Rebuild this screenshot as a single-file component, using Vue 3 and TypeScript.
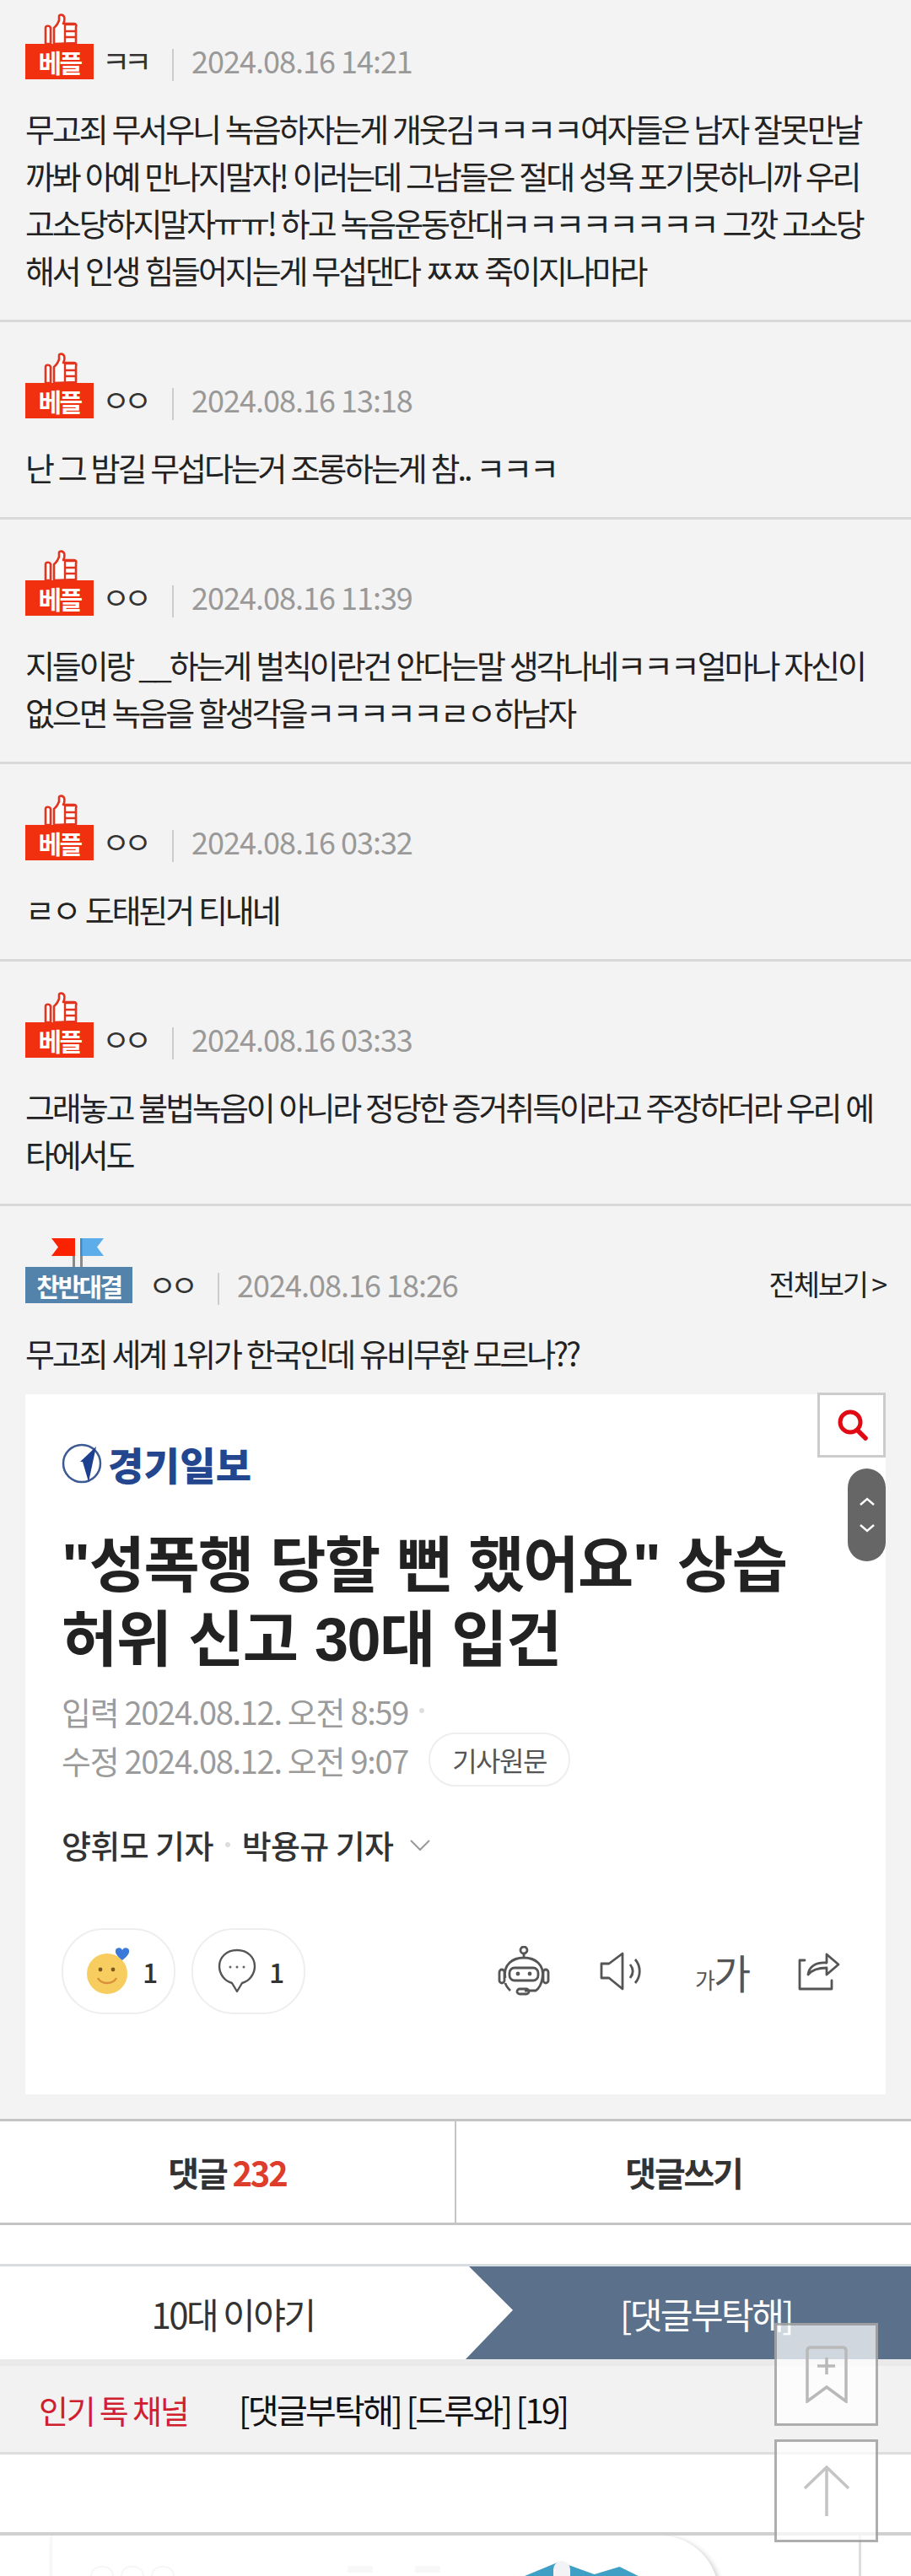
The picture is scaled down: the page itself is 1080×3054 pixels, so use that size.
<script setup lang="ts">
interface Comment { name: string; date: string; lines: string[] }
const comments: Comment[] = [
  { name: 'ㅋㅋ', date: '2024.08.16 14:21', lines: ['무고죄 무서우니 녹음하자는게 개웃김ㅋㅋㅋㅋ여자들은 남자 잘못만날', '까봐 아예 만나지말자! 이러는데 그남들은 절대 성욕 포기못하니까 우리', '고소당하지말자ㅠㅠ! 하고 녹음운동한대ㅋㅋㅋㅋㅋㅋㅋㅋ 그깟 고소당', '해서 인생 힘들어지는게 무섭댄다 ㅉㅉ 죽이지나마라'] },
  { name: 'ㅇㅇ', date: '2024.08.16 13:18', lines: ['난 그 밤길 무섭다는거 조롱하는게 참.. ㅋㅋㅋ'] },
  { name: 'ㅇㅇ', date: '2024.08.16 11:39', lines: ['지들이랑 __하는게 벌칙이란건 안다는말 생각나네ㅋㅋㅋ얼마나 자신이', '없으면 녹음을 할생각을ㅋㅋㅋㅋㅋㄹㅇ하남자'] },
  { name: 'ㅇㅇ', date: '2024.08.16 03:32', lines: ['ㄹㅇ 도태된거 티내네'] },
  { name: 'ㅇㅇ', date: '2024.08.16 03:33', lines: ['그래놓고 불법녹음이 아니라 정당한 증거취득이라고 주장하더라 우리 에', '타에서도'] },
]
</script>

<template>
  <div class="page">
    <section v-for="(c, i) in comments" :key="i" class="row" :class="{ first: i === 0 }">
      <div class="head">
        <div class="badge-col">
          <svg class="thumb" width="40" height="36" viewBox="0 0 40 36">
            <path d="M12 36V17c4-3 5-6 6-9V3c0-2 5-2 6 1 1 3 0 6-1 8h13c2 0 3 2 2 4v19z" fill="#fff" stroke="#e2341f" stroke-width="2.600" stroke-linejoin="round" />
            <path d="M2 36V17c0-3 5-3 6 0v19z" fill="#fff" stroke="#e2341f" stroke-width="2.600" />
            <path d="M25 13h13M25 21h13M25 28h13" stroke="#e2341f" stroke-width="2.400" />
            <path d="M25 12v24" stroke="#e2341f" stroke-width="2.400" />
          </svg>
          <div class="badge best">베플</div>
        </div>
        <span class="name">{{ c.name }}</span>
        <span class="sep"></span>
        <span class="date">{{ c.date }}</span>
      </div>
      <p v-for="(l, j) in c.lines" :key="j" class="txt">{{ l }}</p>
    </section>

    <section class="topic">
      <div class="head">
        <div class="badge-col">
          <svg class="flags" width="66" height="34" viewBox="0 0 66 34">
            <path d="M2 0h28v21H2l8-10.500z" fill="#fa2200" />
            <path d="M36 0h28l-8 10.500 8 10.500H36z" fill="#5cadea" />
            <path d="M27 21h3v13h-3zM36 21h3v13h-3z" fill="#8a8a8a" />
            <path d="M36 0h2.500v21H36z" fill="#3a8ec9" />
          </svg>
          <div class="badge vs">찬반대결</div>
        </div>
        <span class="name vs-name">ㅇㅇ</span>
        <span class="sep"></span>
        <span class="date">2024.08.16 18:26</span>
        <span class="more">전체보기 &gt;</span>
      </div>
      <p class="txt title">무고죄 세계 1위가 한국인데 유비무환 모르나??</p>

      <div class="card">
        <div class="search">
          <svg width="40" height="44" viewBox="0 0 40 44">
            <circle cx="18" cy="18" r="12" fill="none" stroke="#e00a14" stroke-width="5" />
            <path d="M27 28l9 9" stroke="#e00a14" stroke-width="5.500" stroke-linecap="round" />
          </svg>
        </div>
        <div class="scroller">
          <svg width="20" height="12" viewBox="0 0 20 12"><path d="M2 10l8-7 8 7" fill="none" stroke="#fff" stroke-width="2.400" /></svg>
          <svg width="20" height="12" viewBox="0 0 20 12"><path d="M2 2l8 7 8-7" fill="none" stroke="#fff" stroke-width="2.400" /></svg>
        </div>

        <div class="logo">
          <svg width="50" height="52" viewBox="0 0 50 52">
            <circle cx="25" cy="26" r="22" fill="none" stroke="#3c5a94" stroke-width="2.500" />
            <path d="M2 24h21l19-18-9 42-7-24z" fill="#1d3f8f" />
          </svg>
          <span>경기일보</span>
        </div>
        <h2 class="headline">"성폭행 당할 뻔 했어요" 상습<br />허위 신고 30대 입건</h2>
        <div class="meta">입력 2024.08.12. 오전 8:59 <i class="dot"></i></div>
        <div class="meta">수정 2024.08.12. 오전 9:07<span class="origin">기사원문</span></div>
        <div class="authors">양휘모 기자 <i class="dot"></i> 박용규 기자
          <svg width="28" height="16" viewBox="0 0 28 16"><path d="M3 3l11 11L25 3" fill="none" stroke="#999" stroke-width="2" /></svg>
        </div>
        <div class="actions">
          <div class="react">
            <svg width="52" height="58" viewBox="0 0 52 58">
              <circle cx="24" cy="32" r="24" fill="#f6cd5e" />
              <circle cx="16" cy="27" r="2.400" fill="#7a5a20" />
              <circle cx="31" cy="27" r="2.400" fill="#7a5a20" />
              <path d="M13 37c4 8 18 8 22 0" fill="none" stroke="#d98f3a" stroke-width="2.400" />
              <path d="M42 16c-5-4-9-8-8-12 1-3 6-4 8 0 2-4 7-3 8 0 1 4-3 8-8 12z" fill="#3b79d8" />
            </svg>
            <b>1</b>
          </div>
          <div class="react">
            <svg width="48" height="56" viewBox="0 0 48 56">
              <path d="M24 3C11 3 3 12 3 22c0 10 7 18 15 20l6 10 6-10c8-2 15-10 15-20C45 12 37 3 24 3z" fill="none" stroke="#555" stroke-width="2.400" stroke-linejoin="round" />
              <circle cx="16" cy="23" r="1.500" fill="#666" /><circle cx="24" cy="23" r="1.500" fill="#666" /><circle cx="32" cy="23" r="1.500" fill="#666" />
            </svg>
            <b>1</b>
          </div>
          <div class="tools">
            <svg width="62" height="60" viewBox="0 0 62 60" fill="none" stroke="#555" stroke-width="2.800">
              <circle cx="31" cy="5" r="4" />
              <path d="M31 9v5M9 38C6 22 18 14 31 14s25 8 22 24c-1 6-3 12-8 15H32" />
              <rect x="14" y="26" width="34" height="15" rx="6" />
              <rect x="2" y="28" width="6" height="16" rx="3" /><rect x="54" y="28" width="6" height="16" rx="3" />
              <rect x="23" y="51" width="14" height="6" rx="3" />
              <path d="M9 44c1 4 4 7 6 9" />
              <circle cx="24" cy="33" r="1" fill="#555" /><circle cx="38" cy="33" r="1" fill="#555" />
            </svg>
            <svg width="54" height="46" viewBox="0 0 54 46" fill="none" stroke="#555" stroke-width="2.800" stroke-linejoin="round">
              <path d="M2 14h9L27 2v42L11 31H2z" />
              <path d="M36 15c4 5 4 11 0 16M42 9c7 8 7 20 0 28" />
            </svg>
            <span class="fontsize"><small>가</small>가</span>
            <svg width="52" height="48" viewBox="0 0 52 48" fill="none" stroke="#555" stroke-width="2.800" stroke-linejoin="round" stroke-linecap="round">
              <path d="M9 11H3v34h38v-10" />
              <path d="M13 28c1-10 10-15 22-14V4l14 12-14 12V20c-9 0-17 2-22 8z" />
            </svg>
          </div>
        </div>
      </div>
    </section>

    <div class="btns">
      <div class="btn">댓글 <em>232</em></div>
      <div class="btn">댓글쓰기</div>
    </div>

    <div class="tabs">
      <div class="tab">10대 이야기</div>
      <div class="tab active">[댓글부탁해]</div>
    </div>

    <div class="channel">
      <span class="ch-title">인기 톡 채널</span>
      <span class="ch-links">[댓글부탁해] [드루와] [19]</span>
    </div>

    <div class="ad">
      <div class="ad-card">
        <div class="ad-pale">
          <i></i><i></i><i></i>
        </div>
        <div class="ad-pale wide">
          <i></i><i></i>
        </div>
        <div class="ad-shape"></div>
        <div class="ad-pin"></div>
      </div>
      <div class="ad-frame"></div>
    </div>

    <button class="float one">
      <svg width="52" height="68" viewBox="0 0 52 68" fill="none" stroke="#b9b9b9" stroke-width="3.500">
        <path d="M3 66V6q0-4 4-4h38q4 0 4 4v60L26 49z" />
        <path d="M26 14v20M15 24h21" />
      </svg>
    </button>
    <button class="float two">
      <svg width="56" height="60" viewBox="0 0 56 60" fill="none" stroke="#c4c4c4" stroke-width="3.500">
        <path d="M2 27L28 2l26 25M28 2v58" />
      </svg>
    </button>
  </div>
</template>

<style scoped>
.page {
  position: relative;
  width: 1080px;
  height: 3054px;
  overflow: hidden;
  background: #fff;
  font-family: "Noto Sans CJK KR", "Noto Sans", sans-serif;
  color: #222;
}
.row {
  box-sizing: border-box;
  background: #f3f3f3;
  padding: 36px 30px 31px;
  border-bottom: 3px solid #d9d9d9;
}
.row.first { padding-top: 16px; }
.head {
  display: flex;
  align-items: flex-end;
}
.badge-col {
  display: flex;
  flex-direction: column;
  align-items: center;
}
.thumb { display: block; margin-left: 2px; }
.flags { display: block; margin-left: -4px; }
.badge {
  box-sizing: border-box;
  display: flex;
  align-items: center;
  justify-content: center;
  height: 42px;
  color: #fff;
  font-weight: 700;
  font-size: 30px;
  letter-spacing: -2.500px;
  line-height: 1;
}
.best { width: 81px; background: #f0300f; }
.vs { width: 127px; height: 43px; background: #5383aa; }
.name {
  width: 81px;
  margin-left: 10px;
  height: 42px;
  line-height: 38px;
  font-size: 36px;
  letter-spacing: -7px;
  color: #333;
  white-space: nowrap;
}
.vs-name { width: 80px; margin-left: 19px; }
.sep {
  width: 2px;
  height: 38px;
  margin-bottom: -2px;
  margin-left: 2px;
  background: #ccc;
}
.date {
  margin-left: 21px;
  height: 42px;
  line-height: 38px;
  font-size: 36px;
  letter-spacing: -1px;
  color: #999;
  white-space: nowrap;
}
.more {
  margin-left: auto;
  height: 42px;
  line-height: 38px;
  font-size: 34px;
  letter-spacing: -2.200px;
  color: #222;
  white-space: nowrap;
}
.txt {
  margin: 0;
  font-size: 38px;
  line-height: 56px;
  letter-spacing: -3.100px;
  word-spacing: 1.500px;
  color: #222;
  white-space: nowrap;
}
.row .txt:first-of-type { margin-top: 30px; }
.topic {
  background: #f3f3f3;
  padding: 38px 30px 29px;
}
.title { margin-top: 31px; }
.card {
  position: relative;
  box-sizing: border-box;
  height: 830px;
  margin-top: 21px;
  padding: 56px 0 0 43px;
  background: #fff;
}
.search {
  position: absolute;
  top: -2px;
  right: 0;
  box-sizing: border-box;
  width: 81px;
  height: 77px;
  display: flex;
  align-items: center;
  justify-content: center;
  background: #fff;
  border: 3px solid #ccc;
}
.scroller {
  position: absolute;
  top: 88px;
  right: 0;
  box-sizing: border-box;
  width: 45px;
  height: 110px;
  border-radius: 23px;
  background: #666;
  display: flex;
  flex-direction: column;
  align-items: center;
  justify-content: center;
  gap: 20px;
}
.logo {
  display: flex;
  align-items: center;
  gap: 6px;
  height: 52px;
  color: #23468f;
  font-size: 46px;
  font-weight: 900;
  letter-spacing: .3px;
  margin-left: -1px;
}
.headline {
  margin: 51px 0 0;
  font-family: "Liberation Sans", "Noto Sans CJK KR", sans-serif;
  font-size: 72px;
  line-height: 88px;
  font-weight: 700;
  letter-spacing: -1.500px;
  word-spacing: 2px;
  color: #222;
  white-space: nowrap;
}
.meta {
  display: flex;
  align-items: center;
  height: 58px;
  font-size: 38px;
  letter-spacing: -1.300px;
  color: #9b9b9b;
  white-space: pre;
}
.headline + .meta { margin-top: 11px; }
.dot {
  display: inline-block;
  width: 6px;
  height: 6px;
  border-radius: 50%;
  background: #ddd;
  margin: 0 6px;
}
.origin {
  margin-left: 24px;
  width: 168px;
  height: 64px;
  box-sizing: border-box;
  border: 2px solid #eee;
  border-radius: 32px;
  display: flex;
  align-items: center;
  justify-content: center;
  font-size: 32px;
  letter-spacing: -1.500px;
  color: #555;
}
.authors {
  margin-top: 52px;
  height: 40px;
  line-height: 40px;
  font-size: 38px;
  font-weight: 500;
  color: #333;
  letter-spacing: -.6px;
  display: flex;
  align-items: center;
  white-space: pre;
}
.authors svg { margin-left: 10px; }
.actions {
  display: flex;
  align-items: center;
  gap: 19px;
  margin-top: 79px;
}
.react {
  box-sizing: border-box;
  display: flex;
  align-items: center;
  gap: 14px;
  width: 135px;
  height: 102px;
  padding-left: 28px;
  border: 2px solid #eee;
  border-radius: 50px;
}
.react b {
  font-weight: 500;
  font-size: 32px;
  color: #333;
}
.tools {
  display: flex;
  align-items: center;
  margin-left: 209px;
  gap: 59px;
  color: #555;
}
.fontsize {
  font-size: 48px;
  letter-spacing: -2px;
  line-height: 1;
  width: 62px;
  white-space: nowrap;
}
.fontsize small { font-size: 26px; }
.btns {
  box-sizing: border-box;
  display: flex;
  height: 126px;
  background: #fff;
  border-top: 3px solid #c4c4c4;
  border-bottom: 3px solid #c4c4c4;
}
.btn {
  flex: 1;
  display: flex;
  align-items: center;
  justify-content: center;
  font-size: 40px;
  font-weight: 700;
  letter-spacing: -2.200px;
  color: #333;
  white-space: pre;
}
.btn + .btn { border-left: 2px solid #c4c4c4; }
.btn em { font-style: normal; color: #dd3d2a; }
.tabs {
  position: relative;
  display: flex;
  margin-top: 46px;
  height: 113px;
  border-top: 3px solid #d8dde2;
  box-sizing: border-box;
  background: #fff;
}
.tab {
  display: flex;
  align-items: center;
  justify-content: center;
  width: 552px;
  font-size: 42px;
  letter-spacing: -2.500px;
  color: #333;
  white-space: nowrap;
}
.active {
  flex: 1;
  padding-left: 42px;
  background: #5b718b;
  color: #fff;
  clip-path: polygon(4px 0, 56px 47%, 0 100%, 100% 100%, 100% 0);
}
.channel {
  box-sizing: border-box;
  display: flex;
  align-items: center;
  height: 113px;
  padding-left: 46px;
  background: #f2f2f2;
  border-top: 8px solid #eaeaea;
  border-bottom: 3px solid #dedede;
  white-space: nowrap;
}
.ch-title { color: #d0202e; width: 237px; font-size: 38px; letter-spacing: -2.200px; }
.ch-links { color: #111; font-size: 40px; letter-spacing: -2.700px; }
.ad {
  position: relative;
  margin-top: 92px;
  height: 51px;
  border-top: 4px solid #d0d0d0;
  overflow: hidden;
}
.ad-card {
  position: relative;
  width: 790px;
  height: 120px;
  margin-left: 60px;
  background: #fff;
  border-radius: 0 70px 0 0;
  border-left: 2px solid #f6f6f6;
  box-shadow: 3px 2px 6px rgba(0, 0, 0, .2);
  overflow: hidden;
}
.ad-pale {
  position: absolute;
  left: 45px;
  top: 36px;
  display: flex;
  gap: 8px;
}
.ad-pale i {
  display: block;
  width: 24px;
  height: 60px;
  border: 2px solid #f8f5f5;
  border-radius: 12px;
}
.ad-pale.wide { left: 350px; gap: 50px; }
.ad-pale.wide i { width: 30px; height: 8px; background: #f8f8f8; border: 0; border-radius: 0; }
.ad-shape {
  position: absolute;
  left: 543px;
  top: 31px;
  width: 166px;
  height: 60px;
  background: #3f9fc4;
  clip-path: polygon(0 40%, 35% 0, 60% 25%, 78% 10%, 100% 40%, 100% 100%, 0 100%);
}
.ad-pin {
  position: absolute;
  left: 594px;
  top: 30px;
  width: 20px;
  height: 30px;
  border-radius: 10px;
  background: #f3f3f6;
}
.ad-frame {
  position: absolute;
  top: 0;
  left: 1018px;
  width: 3px;
  height: 60px;
  background: #ddd;
}
.float {
  position: absolute;
  left: 918px;
  box-sizing: border-box;
  width: 123px;
  height: 122px;
  padding: 0;
  display: flex;
  align-items: center;
  justify-content: center;
  background: rgba(255, 255, 255, .72);
  border: 3px solid rgba(120, 120, 120, .6);
}
.one { top: 2754px; }
.two { top: 2892px; }
</style>
